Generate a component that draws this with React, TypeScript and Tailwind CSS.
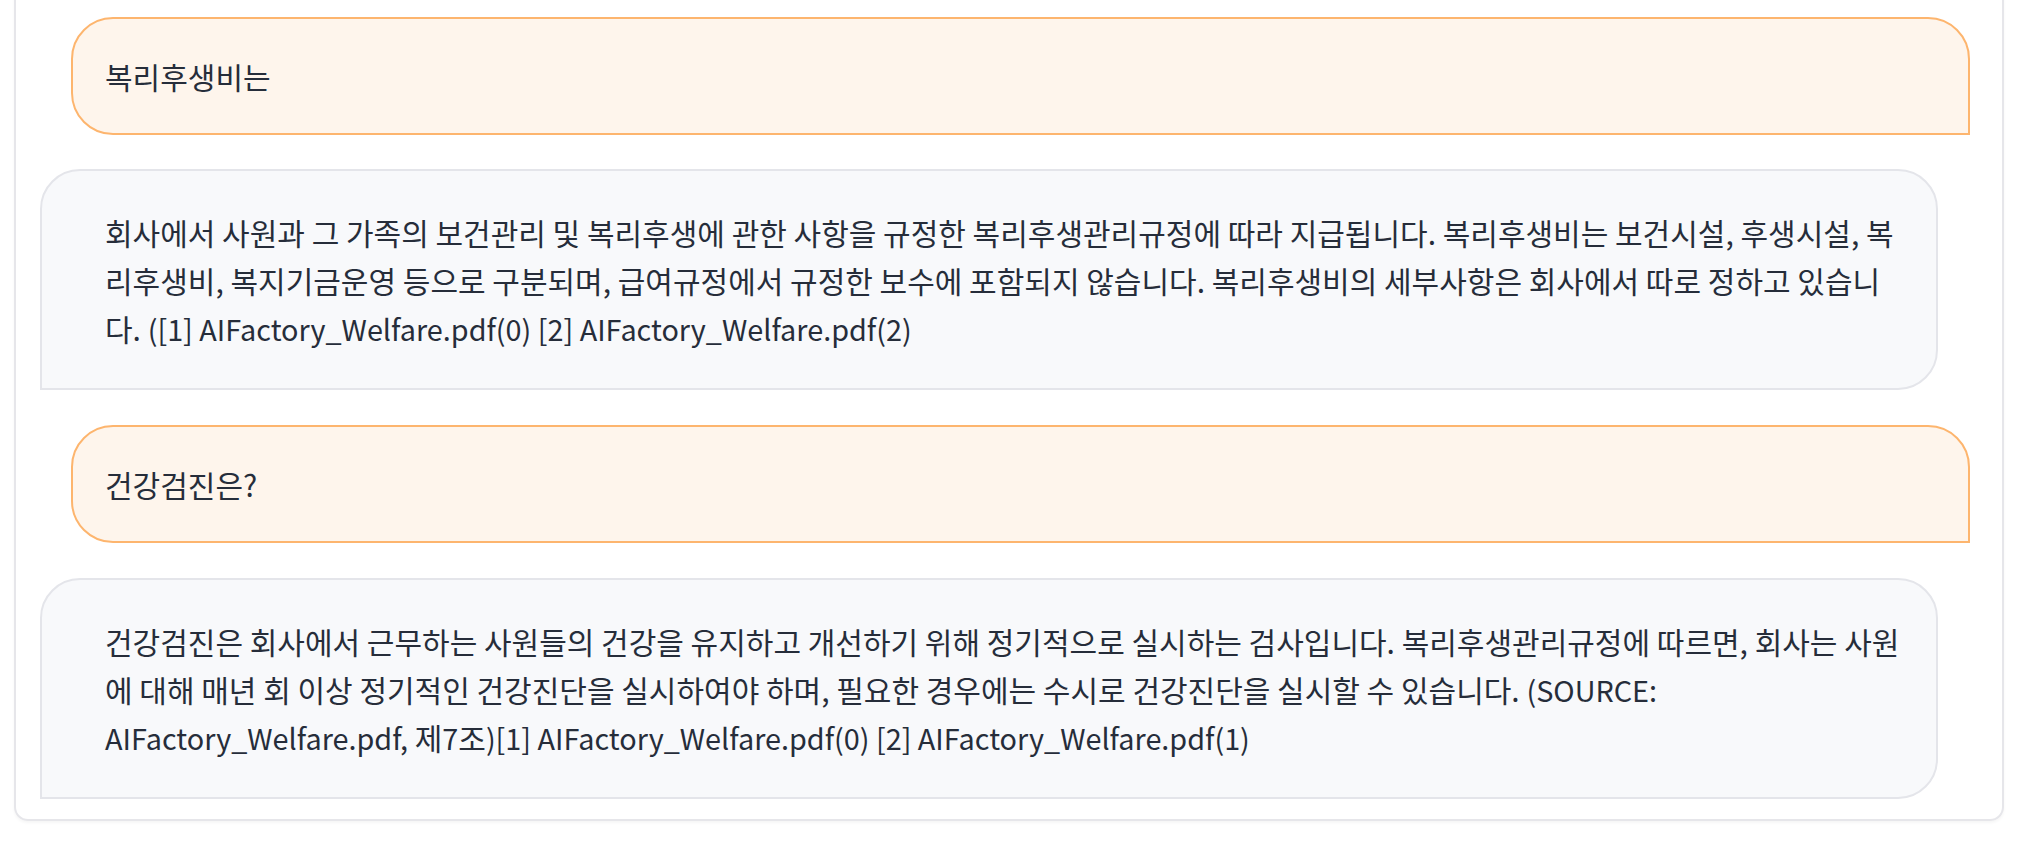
import React from "react";

const font = { fontFamily: '"Noto Sans CJK KR", "Noto Sans", sans-serif' };

function Rich({ text }: { text: string }) {
  const re = /[A-Za-z0-9_\[\]().:,]*[A-Za-z0-9][A-Za-z0-9_\[\]().:,]*(?: [A-Za-z0-9_\[\]().:,]*[A-Za-z0-9][A-Za-z0-9_\[\]().:,]*)*/g;
  const parts: React.ReactNode[] = [];
  let last = 0;
  let m: RegExpExecArray | null;
  let i = 0;
  while ((m = re.exec(text)) !== null) {
    if (m.index > last) parts.push(text.slice(last, m.index));
    parts.push(
      <span key={i++} className="text-[28.8px] leading-none">
        {m[0]}
      </span>
    );
    last = m.index + m[0].length;
  }
  if (last < text.length) parts.push(text.slice(last));
  return <>{parts}</>;
}

function UserBubble({ text }: { text: string }) {
  return (
    <div className="ml-[55px] mr-[32px] rounded-tl-[42px] rounded-tr-[42px] rounded-bl-[42px] rounded-br-none border-2 border-[#fdb56e] bg-[#fef5ec] pl-[32px] pr-[30px] py-[33px] text-[30px] leading-[48px] text-[#262d3a]">
      {text}
    </div>
  );
}

function BotBubble({ text }: { text: string }) {
  return (
    <div className="ml-[24px] mr-[64px] rounded-tl-[40px] rounded-tr-[40px] rounded-br-[40px] rounded-bl-none border-2 border-[#e4e5ea] bg-[#f8f9fb] pl-[63px] pr-[30px] pt-[37px] pb-[36px] text-[30px] leading-[48px] text-[#262d3a]">
      <Rich text={text} />
    </div>
  );
}

export default function App() {
  return (
    <div className="w-[2018px] h-[848px] bg-white overflow-hidden" style={font}>
      <div className="mx-[14px] -mt-[30px] rounded-b-[14px] border-2 border-[#e6e6ea] shadow-[0_2px_3px_rgba(0,0,0,0.04)] pt-[45px] pb-[20px] flex flex-col">
        <UserBubble text="복리후생비는" />
        <div className="h-[34px]" />
        <BotBubble text="회사에서 사원과 그 가족의 보건관리 및 복리후생에 관한 사항을 규정한 복리후생관리규정에 따라 지급됩니다. 복리후생비는 보건시설, 후생시설, 복리후생비, 복지기금운영 등으로 구분되며, 급여규정에서 규정한 보수에 포함되지 않습니다. 복리후생비의 세부사항은 회사에서 따로 정하고 있습니다. ([1] AIFactory_Welfare.pdf(0) [2] AIFactory_Welfare.pdf(2)" />
        <div className="h-[35px]" />
        <UserBubble text="건강검진은?" />
        <div className="h-[35px]" />
        <BotBubble text="건강검진은 회사에서 근무하는 사원들의 건강을 유지하고 개선하기 위해 정기적으로 실시하는 검사입니다. 복리후생관리규정에 따르면, 회사는 사원에 대해 매년 회 이상 정기적인 건강진단을 실시하여야 하며, 필요한 경우에는 수시로 건강진단을 실시할 수 있습니다. (SOURCE: AIFactory_Welfare.pdf, 제7조)[1] AIFactory_Welfare.pdf(0) [2] AIFactory_Welfare.pdf(1)" />
      </div>
    </div>
  );
}
